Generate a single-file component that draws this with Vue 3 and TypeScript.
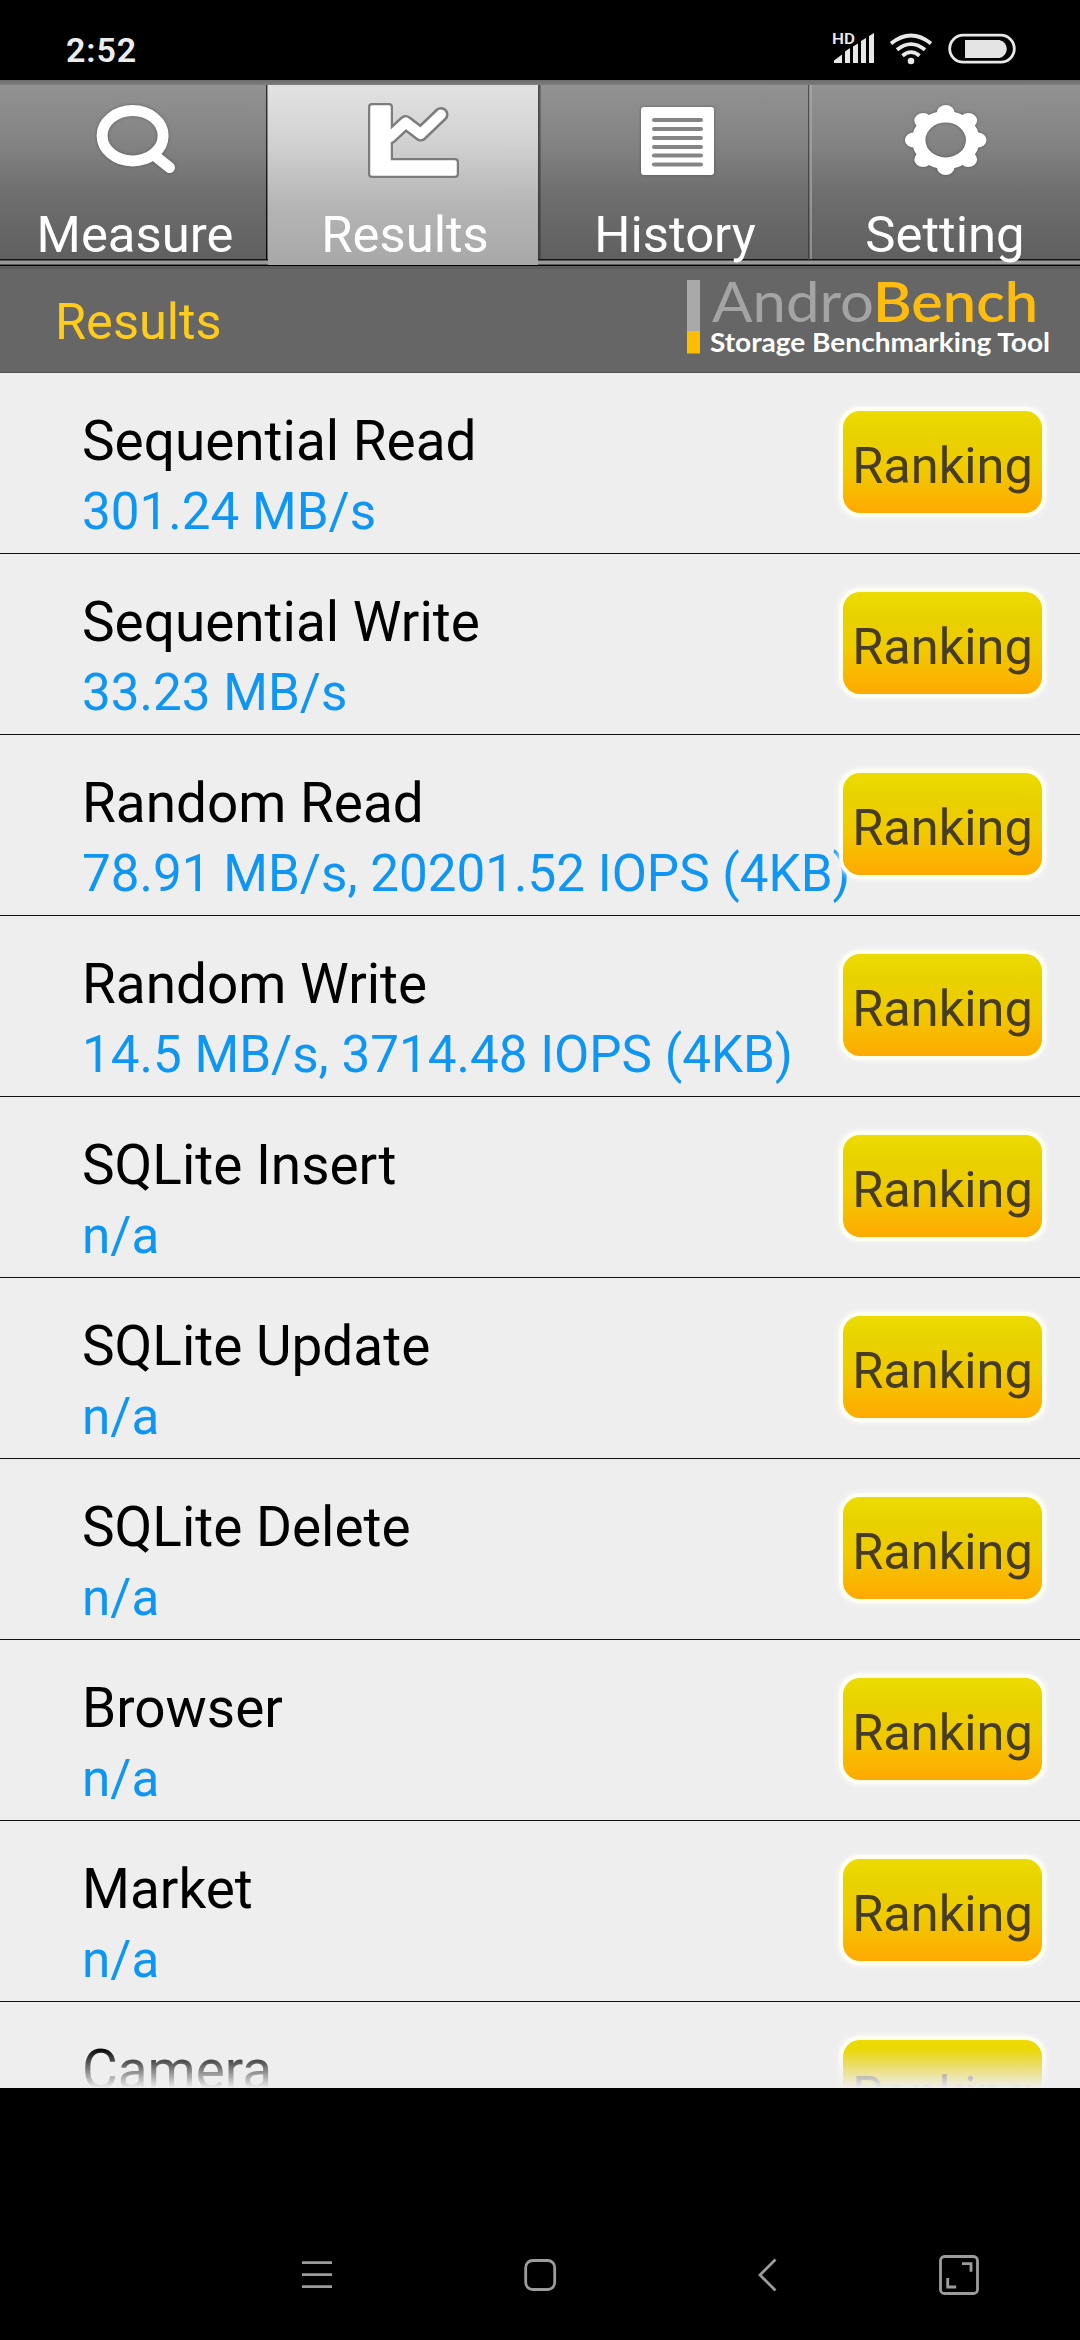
<script setup lang="ts">
interface Tab {
  id: 'measure' | 'results' | 'history' | 'setting'
  label: string
}

interface Result {
  title: string
  value: string
}

const tabs: Tab[] = [
  { id: 'measure', label: 'Measure' },
  { id: 'results', label: 'Results' },
  { id: 'history', label: 'History' },
  { id: 'setting', label: 'Setting' },
]
const active = 'results'

const results: Result[] = [
  { title: 'Sequential Read', value: '301.24 MB/s' },
  { title: 'Sequential Write', value: '33.23 MB/s' },
  { title: 'Random Read', value: '78.91 MB/s, 20201.52 IOPS (4KB)' },
  { title: 'Random Write', value: '14.5 MB/s, 3714.48 IOPS (4KB)' },
  { title: 'SQLite Insert', value: 'n/a' },
  { title: 'SQLite Update', value: 'n/a' },
  { title: 'SQLite Delete', value: 'n/a' },
  { title: 'Browser', value: 'n/a' },
  { title: 'Market', value: 'n/a' },
  { title: 'Camera', value: 'n/a' },
]

const historyLines = [18, 27, 36, 45, 53.5, 62.5]
const teeth = [0, 45, 90, 135, 180, 225, 270, 315]
</script>

<template>
  <div class="screen">
    <header class="status">
      <span class="clock">2:52</span>
      <svg class="status-icons" width="190" height="40" viewBox="830 28 190 40">
        <text x="832" y="43.6" class="hd" textLength="23" lengthAdjust="spacingAndGlyphs">HD</text>
        <g fill="#e8e8e8">
          <path d="M834 63v-2.500l8-6v8.500zM845 63V51.500l5-3.500v15zM853 63V46.500l5-3v19.500zM861 63V41l5-3v25zM869 63V36l5-3v30z" />
          <circle cx="911" cy="61" r="3.300" />
        </g>
        <g fill="none" stroke="#e8e8e8" stroke-width="3.800">
          <path d="M891 43.500Q911 27.500 931 43.500" />
          <path d="M897 49.800Q911 38.500 925 49.800" />
          <path d="M902.500 55.800Q911 48.500 919.500 55.800" />
          <rect x="949.700" y="35.200" width="64.600" height="27" rx="13.500" stroke-width="2.800" />
        </g>
        <path d="M965 40h34.500a9.200 9.200 0 0 1 0 18H965z" fill="#e4e4e4" />
      </svg>
    </header>

    <nav class="tabs">
      <div v-for="tab in tabs" :key="tab.id" class="tab" :class="[tab.id, { selected: tab.id === active }]">
        <svg class="tab-icon" width="100" height="84" viewBox="0 0 100 84">
          <g v-if="tab.id === 'measure'" class="glyph">
            <path d="M69 55L84.500 67.500" stroke="#fff" stroke-width="11" stroke-linecap="round" />
            <ellipse cx="47.600" cy="35.700" rx="30.500" ry="25.200" fill="none" stroke="#fff" stroke-width="11" />
          </g>
          <g v-else-if="tab.id === 'results'" class="chart" stroke-linejoin="round" stroke-linecap="round">
            <g fill="#7c7c7c" stroke="#7c7c7c">
              <path d="M17 7H34V62H100V74H17z" stroke-width="8" />
              <path d="M35 37L50.700 22.500L65.700 34L86 14.500" fill="none" stroke-width="15" />
            </g>
            <g fill="#fff" stroke="#fff">
              <path d="M17 7H34V62H100V74H17z" stroke-width="3.500" />
              <path d="M35 37L50.700 22.500L65.700 34L86 14.500" fill="none" stroke-width="10" />
            </g>
          </g>
          <g v-else-if="tab.id === 'history'" class="glyph">
            <rect x="16" y="7" width="73" height="68" rx="3" fill="#fff" />
            <rect v-for="y in historyLines" :key="y" x="27" :y="y" width="51" height="4" rx="2" fill="#858585" />
          </g>
          <g v-else class="glyph">
            <g transform="translate(50.700 40) scale(1 .86)">
              <circle r="27" fill="none" stroke="#fff" stroke-width="13.500" />
              <circle v-for="a in teeth" :key="a" cx="32" cy="0" r="8.800" fill="#fff" :transform="`rotate(${a})`" />
            </g>
          </g>
        </svg>
        <span class="tab-label">{{ tab.label }}</span>
      </div>
    </nav>

    <div class="titlebar">
      <h1>Results</h1>
      <svg class="logo" width="370" height="80" viewBox="686 276 370 80">
        <rect x="687" y="280" width="13" height="51" fill="#a9a9a9" />
        <rect x="687" y="331" width="13" height="22.500" fill="#fdbd00" />
        <text y="321.700" class="brand">
          <tspan x="712" class="andro" textLength="162" lengthAdjust="spacingAndGlyphs">Andro</tspan><tspan x="873" class="bench" textLength="165" lengthAdjust="spacingAndGlyphs">Bench</tspan>
        </text>
        <text x="710" y="351.700" class="tagline" textLength="340" lengthAdjust="spacingAndGlyphs">Storage Benchmarking Tool</text>
      </svg>
    </div>

    <main class="list">
      <div v-for="r in results" :key="r.title" class="row">
        <div class="info">
          <div class="name">{{ r.title }}</div>
          <div class="value">{{ r.value }}</div>
        </div>
        <button class="ranking">Ranking</button>
      </div>
      <div class="fade"></div>
    </main>

    <footer class="navbar">
      <svg width="1080" height="252" viewBox="0 2088 1080 252" fill="none" stroke="#9c9c9c" stroke-width="2.800">
        <path d="M302 2262.600h30M302 2274.700h30M302 2286.700h30" />
        <rect x="525.700" y="2260.500" width="29" height="29" rx="7" />
        <path d="M775.500 2259.500L760 2275L775.500 2290.500" />
        <rect x="940.500" y="2256.500" width="37" height="37" rx="4" />
        <path d="M962 2263.700h9v8M947.700 2278v9h8.500" />
      </svg>
    </footer>
  </div>
</template>

<style>
body {
  margin: 0;
  background: #000;
}
</style>

<style scoped>
.screen {
  width: 1080px;
  height: 2340px;
  display: flex;
  flex-direction: column;
  overflow: hidden;
  background: #000;
  font-family: Roboto, sans-serif;
}

.status {
  flex: none;
  height: 80px;
  box-sizing: border-box;
  padding: 28px 60px 0 66px;
  display: flex;
  justify-content: space-between;
  align-items: flex-start;
}

.status-icons,
.logo {
  overflow: visible;
}

.clock {
  font-size: 34px;
  line-height: 44px;
  font-weight: 600;
  letter-spacing: 0.9px;
  color: #ececec;
}

.hd {
  font: 600 14.5px Roboto, sans-serif;
  fill: #e8e8e8;
}

.tabs {
  flex: none;
  height: 186px;
  display: flex;
  box-sizing: border-box;
  padding-top: 5px;
  border-bottom: 1px solid #000;
  background: linear-gradient(#6c6c6c, #7e7e7e 5px, #909090 5px);
}

.tab {
  flex: none;
  width: 270px;
  height: 180px;
  box-sizing: border-box;
  background:
    linear-gradient(transparent 174px, #111 174px, #111 175px, #999 176px, #999 179px, #555 179px),
    linear-gradient(#929292, #828282 60px, #6e6e6e 110px, #606060 172px);
  display: flex;
  flex-direction: column;
  align-items: center;
}

.measure {
  width: 268px;
  padding-left: 2px;
  background:
    linear-gradient(#303030, #080808) right 1px top 0 / 1px 175px no-repeat,
    linear-gradient(transparent 174px, #111 174px, #111 175px, #999 176px, #999 179px, #555 179px),
    linear-gradient(#929292, #828282 60px, #6e6e6e 110px, #606060 172px);
}

.tab.selected {
  padding-left: 4px;
  background: linear-gradient(#e2e2e2, #d0d0d0 60px, #b5b5b5 120px, #a8a8a8 178px);
}

.history {
  width: 272px;
  padding-right: 0;
  padding-left: 2px;
  background:
    linear-gradient(90deg, rgba(40, 40, 40, 0.75), rgba(40, 40, 40, 0.25)) left 0 top 0 / 3px 175px no-repeat,
    linear-gradient(#505050, #404040) right 1px top 0 / 1px 175px no-repeat,
    linear-gradient(transparent 174px, #111 174px, #111 175px, #999 176px, #999 179px, #555 179px),
    linear-gradient(#929292, #828282 60px, #6e6e6e 110px, #606060 172px);
}

.setting {
  background:
    linear-gradient(#a4a4a4, #8c8c8c) left 0 top 0 / 2px 174px no-repeat,
    linear-gradient(transparent 174px, #111 174px, #111 175px, #999 176px, #999 179px, #555 179px),
    linear-gradient(#929292, #828282 60px, #6e6e6e 110px, #606060 172px);
}

.tab-icon {
  flex: none;
  margin-top: 15px;
  overflow: visible;
}

.glyph {
  filter: drop-shadow(0 0 1.5px rgba(60, 60, 60, 0.6));
}

.chart {
  filter: blur(0.5px);
}

.tab-label {
  font-size: 50.8px;
  line-height: 60px;
  margin-top: 21px;
  color: #fff;
  white-space: nowrap;
}

.titlebar {
  flex: none;
  height: 107px;
  box-sizing: border-box;
  padding: 10px 24px 0 55px;
  border-bottom: 1px solid #505050;
  background: linear-gradient(#5c5c5c 3px, #666 3px);
  display: flex;
  justify-content: space-between;
}

h1 {
  margin: 16px 0 0;
  font-size: 50.5px;
  line-height: 60px;
  font-weight: 400;
  color: #ffcc1c;
}

.brand {
  font-family: Lato, sans-serif;
  font-size: 56px;
}

.andro {
  fill: #a4a4a4;
}

.bench {
  font-weight: 600;
  fill: #fdbd10;
}

.tagline {
  font: 700 26px Lato, sans-serif;
  fill: #fff;
}

.list {
  position: relative;
  flex: none;
  height: 1715px;
  overflow: hidden;
  background: #eee;
}

.row {
  height: 181px;
  box-sizing: border-box;
  border-bottom: 1px solid #111;
  padding: 36px 38px 0 82px;
  display: flex;
  justify-content: space-between;
}

.info {
  width: 761px;
  white-space: nowrap;
}

.name {
  font-size: 54.9px;
  line-height: 64px;
  color: #000;
}

.value {
  margin-top: 9px;
  font-size: 51.2px;
  line-height: 60px;
  color: #0f96f3;
}

.ranking {
  flex: none;
  position: relative;
  width: 199px;
  height: 102px;
  margin: 2px 0 0;
  padding: 7px 0 0;
  border: 0;
  border-radius: 17px;
  background: linear-gradient(#ecdc00, #e8d200 22%, #efcb00 55%, #f9b800 80%, #fea900);
  box-shadow: 0 0 1px 4px #fffff0, 0 0 4px 6px rgba(255, 255, 255, 0.5);
  font: 50.5px Roboto, sans-serif;
  text-align: center;
  color: #473c24;
}

.fade {
  position: absolute;
  left: 0;
  right: 0;
  bottom: 0;
  height: 40px;
  background: linear-gradient(rgba(238, 238, 238, 0), #eee);
}

.navbar {
  flex: none;
  height: 252px;
}

.navbar svg {
  display: block;
}
</style>
